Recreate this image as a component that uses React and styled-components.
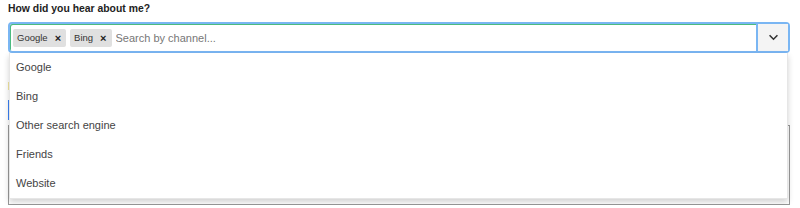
import React from "react";
import styled, { createGlobalStyle } from "styled-components";

const Global = createGlobalStyle`
  body {
    margin: 0;
    padding: 0 8px;
    font-family: "Liberation Sans", Arial, sans-serif;
    background: #fff;
    overflow: hidden;
  }
`;

export default function App() {
  const tags = ["Google", "Bing"];
  const options = ["Google", "Bing", "Other search engine", "Friends", "Website"];

  return (
    <>
      <Global />
      <Label>How did you hear about me?</Label>
      <SelectWrap>
        <Control>
          <ValueArea>
            {tags.map((t) => (
              <Tag key={t}>
                {t}
                <Remove>×</Remove>
              </Tag>
            ))}
            <Search placeholder="Search by channel..." />
          </ValueArea>
          <Toggle>
            <svg width="11" height="7" viewBox="0 0 12 8">
              <path d="M1.5 1.5 L6 6 L10.5 1.5" fill="none" stroke="#333" strokeWidth="1.8" />
            </svg>
          </Toggle>
        </Control>
        <Menu>
          {options.map((o) => (
            <Option key={o}>{o}</Option>
          ))}
        </Menu>
      </SelectWrap>
      <Below>
        <Hint />
        <Action />
        <Textbox />
      </Below>
    </>
  );
}

const Label = styled.div`
  font-size: 10.4px;
  font-weight: 700;
  color: #222;
  line-height: 14px;
  padding-top: 2px;
`;

const SelectWrap = styled.div`
  position: relative;
  margin-top: 6px;
  width: 782px;
`;

const Control = styled.div`
  display: flex;
  height: 31px;
  box-sizing: border-box;
  border: 2px solid #7ab6f3;
  border-radius: 4px;
  box-shadow: inset 1px 1px 0 #4cbb7f;
  background: #fff;
`;

const ValueArea = styled.div`
  flex: 1;
  display: flex;
  align-items: center;
  gap: 4px;
  padding-left: 3px;
`;

const Tag = styled.span`
  display: flex;
  align-items: center;
  gap: 7px;
  height: 18px;
  padding: 0 5px 0 4px;
  background: #e0e0e0;
  border-radius: 2px;
  font-size: 9.5px;
  color: #333;
`;

const Remove = styled.span`
  font-size: 11px;
  font-weight: 700;
  color: #222;
`;

const Search = styled.input`
  border: 0;
  outline: 0;
  flex: 1;
  font-size: 11px;
  font-family: inherit;
  padding: 0;
  color: #333;
  &::placeholder {
    color: #777;
  }
`;

const Toggle = styled.div`
  width: 30px;
  display: flex;
  align-items: center;
  justify-content: center;
  background: #f4f4f4;
  border-left: 2px solid #7ab6f3;
`;

const Menu = styled.ul`
  position: absolute;
  top: 31px;
  left: 1px;
  right: 2px;
  margin: 0;
  padding: 0;
  list-style: none;
  background: #fff;
  border: 1px solid #e6e6e6;
  border-top: 0;
  box-shadow: 0 3px 6px rgba(0, 0, 0, 0.18);
  z-index: 2;
`;

const Option = styled.li`
  height: 29px;
  line-height: 29px;
  padding-left: 6px;
  font-size: 11px;
  color: #444;
`;

const Below = styled.div`
  display: flex;
  flex-direction: column;
  margin-top: 29px;
`;

const Hint = styled.div`
  width: 3px;
  height: 8px;
  background: #f3e6a0;
`;

const Action = styled.div`
  width: 40px;
  height: 20px;
  margin-top: 10px;
  border-left: 2px solid #3b82f6;
`;

const Textbox = styled.div`
  width: 782px;
  height: 80px;
  margin-top: 5px;
  box-sizing: border-box;
  border: 1px solid #999;
`;
